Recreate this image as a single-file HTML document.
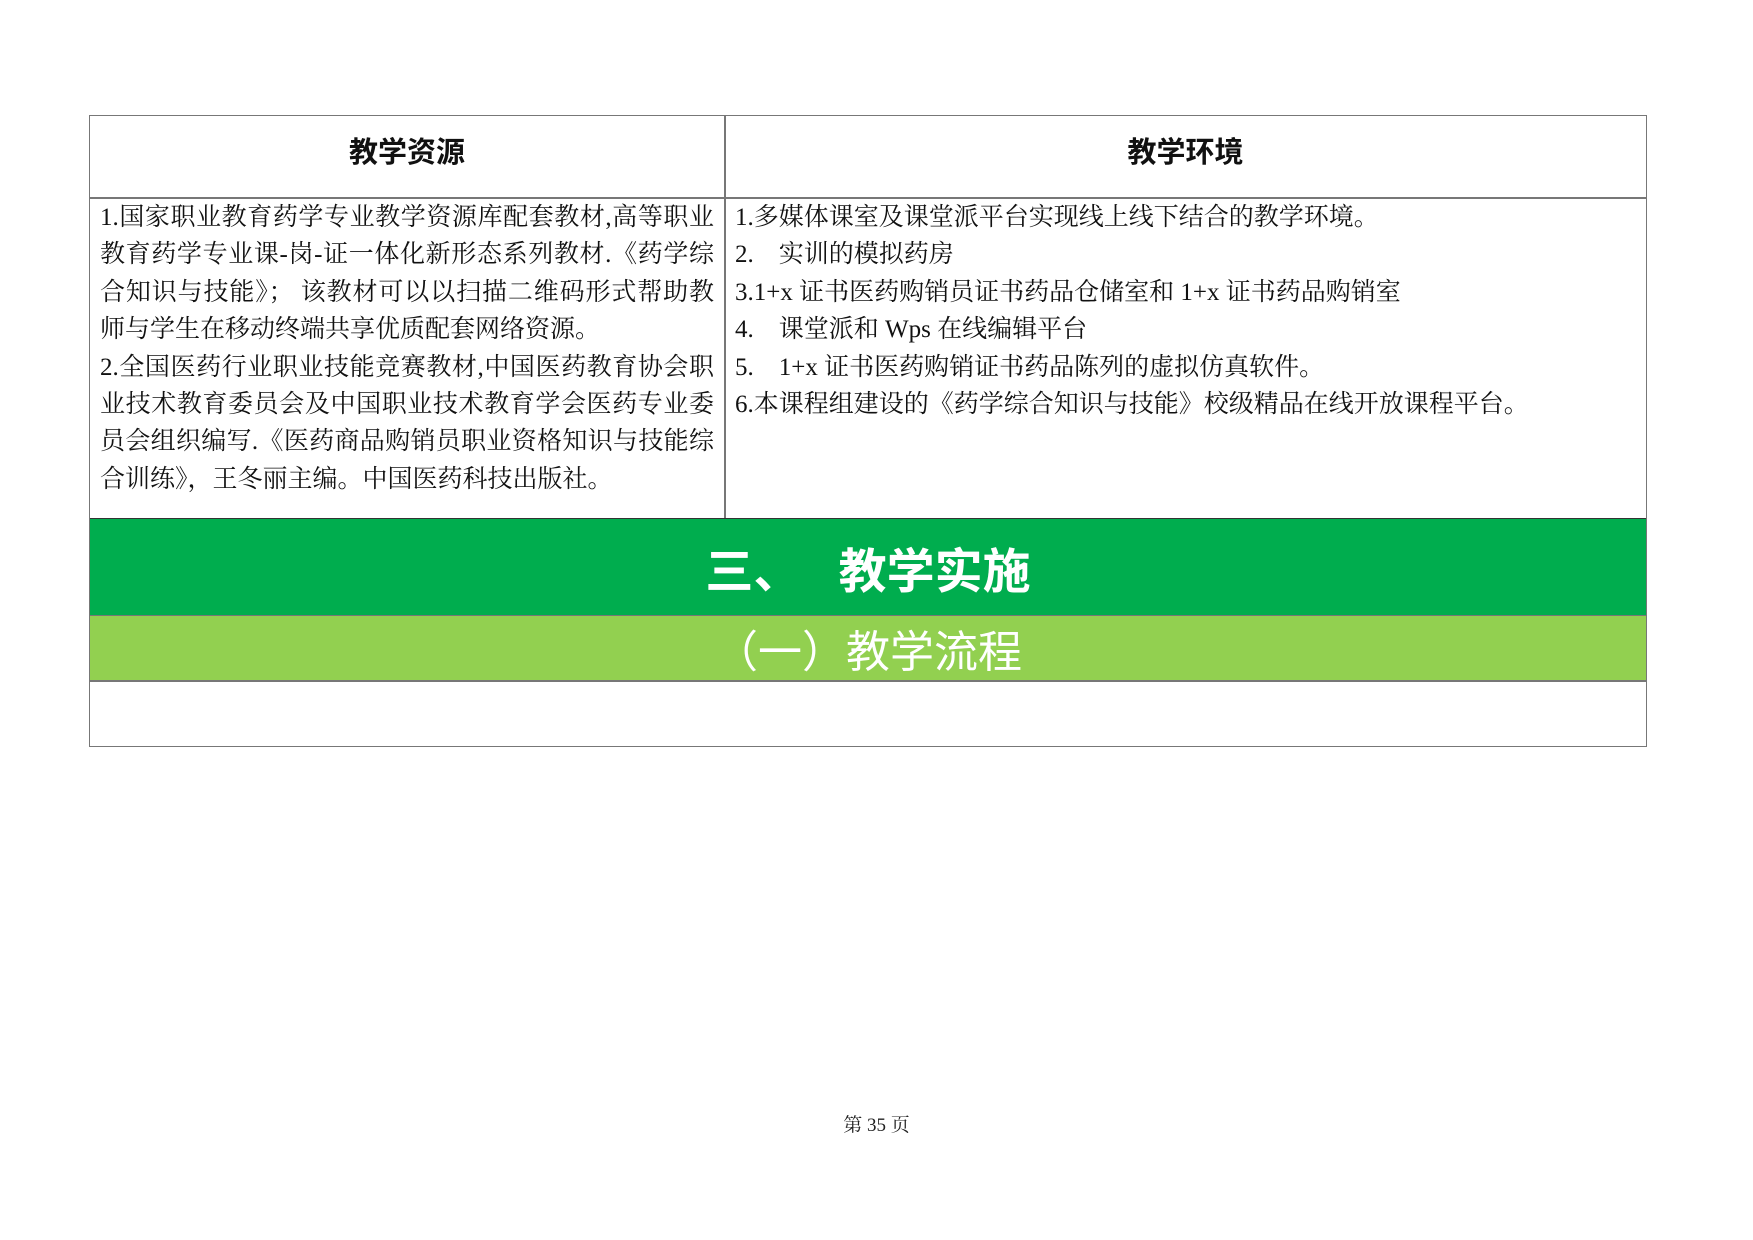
<!DOCTYPE html>
<html><head><meta charset="utf-8"><style>
body{margin:0;width:1753px;height:1240px;background:#fff;position:relative;overflow:hidden}
.t{position:absolute;left:89px;top:115px;width:1558px;height:632px;border:1.5px solid #777;box-sizing:border-box}
.hd{position:absolute;top:14px;height:40px;font:bold 29px "Liberation Sans","Noto Sans CJK SC",sans-serif;display:flex;align-items:center;justify-content:center;color:#111}
.vl{position:absolute;left:634px;top:0;width:1.5px;height:403px;background:#777}
.hl{position:absolute;left:0;right:0;top:81px;height:1.5px;background:#777}
.body{position:absolute;top:83px;font:25px/37.4px "Liberation Serif","Noto Serif CJK SC",serif;color:#111}
.g1{position:absolute;left:0;right:0;top:402px;height:97px;background:#00ad4e;border-top:1.5px solid #333;box-sizing:border-box;color:#fff;font:bold 48px "Liberation Sans","Noto Sans CJK SC",sans-serif;display:flex;align-items:center;justify-content:center}
.g2{position:absolute;left:0;right:0;top:499px;height:67px;background:#92d050;border-top:1.5px solid #777;border-bottom:2px solid #777;box-sizing:border-box;color:#fff;font:44px "Liberation Sans","Noto Sans CJK SC",sans-serif;display:flex;align-items:center;justify-content:center}
.pg{position:absolute;left:0;width:1753px;top:1110px;text-align:center;font:19px "Liberation Serif","Noto Serif CJK SC",serif;color:#222}
</style></head><body>
<div class="t">
<div class="hd" style="left:0;width:634px">教学资源</div>
<div class="hd" style="left:635px;right:0">教学环境</div>
<div class="hl"></div><div class="vl"></div>
<div class="body" style="left:10px;width:614px;text-align:justify;text-align-last:justify">1.国家职业教育药学专业教学资源库配套教材,高等职业<br>教育药学专业课-岗-证一体化新形态系列教材.《药学综<br>合知识与技能》； 该教材可以以扫描二维码形式帮助教<br><span style="display:inline-block;text-align-last:left">师与学生在移动终端共享优质配套网络资源。</span><br>2.全国医药行业职业技能竞赛教材,中国医药教育协会职<br>业技术教育委员会及中国职业技术教育学会医药专业委<br>员会组织编写.《医药商品购销员职业资格知识与技能综<br><span style="display:inline-block;text-align-last:left">合训练》，王冬丽主编。中国医药科技出版社。</span></div>
<div class="body" style="left:645px;width:900px">1.多媒体课室及课堂派平台实现线上线下结合的教学环境。<br>2.　实训的模拟药房<br>3.1+x 证书医药购销员证书药品仓储室和 1+x 证书药品购销室<br>4.　课堂派和 Wps 在线编辑平台<br>5.　1+x 证书医药购销证书药品陈列的虚拟仿真软件。<br>6.本课程组建设的《药学综合知识与技能》校级精品在线开放课程平台。</div>
<div class="g1">三、　 教学实施</div>
<div class="g2">（一）教学流程</div>
</div>
<div class="pg">第 35 页</div>
</body></html>
